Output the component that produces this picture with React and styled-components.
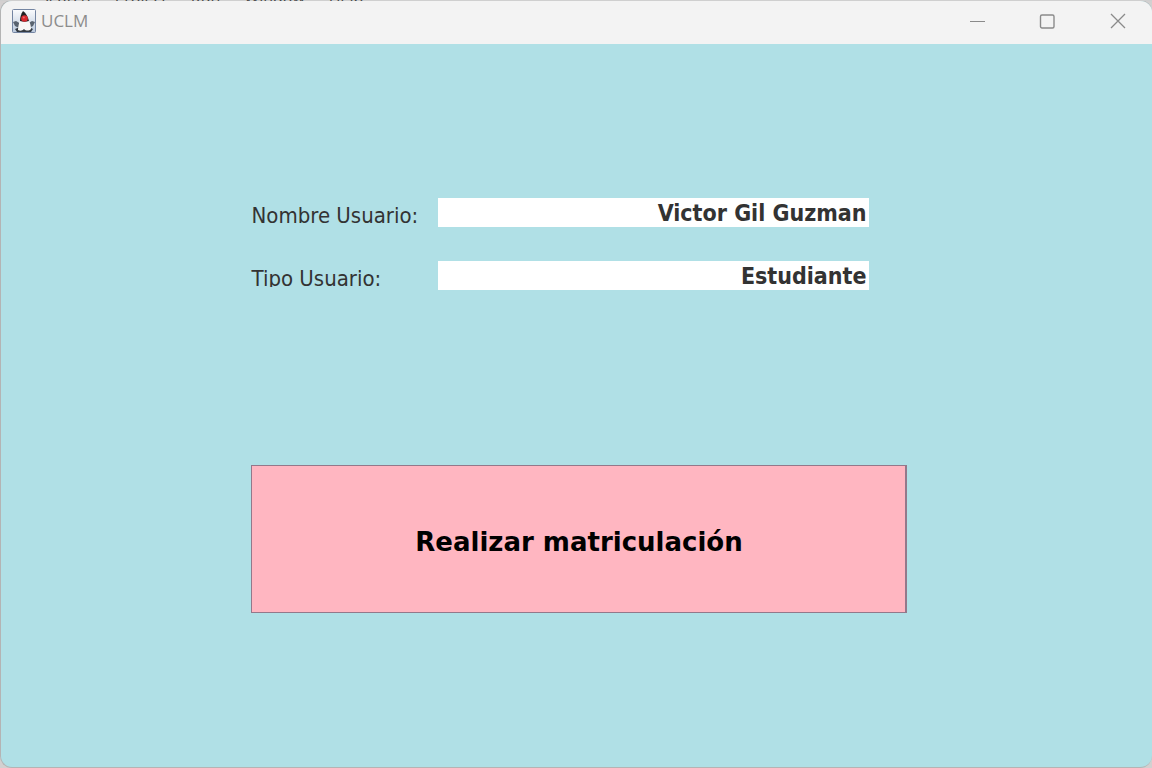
import React from "react";
import styled, { createGlobalStyle } from "styled-components";

const GlobalStyle = createGlobalStyle`
  *, *::before, *::after { box-sizing: border-box; }
  body { margin: 0; background: #d3d0d0; }
`;

const dialogFont = '"DejaVu Sans Condensed", "DejaVu Sans", sans-serif';

const Desktop = styled.div`
  position: relative;
  min-height: 100vh;
  display: flex;
  flex-direction: column;
`;

const Frame = styled.main`
  flex: 1;
  display: flex;
  flex-direction: column;
  overflow: hidden;
  border: 1px solid #b4b4b4;
  border-right: 0;
  border-radius: 12px;
  background: #b0e0e6;
`;

const TitleBar = styled.header`
  display: flex;
  align-items: center;
  height: 43px;
  padding: 0 0 3px 11px;
  background: #f3f3f3;
`;

const Title = styled.h1`
  flex: 1;
  margin: 0 0 0 5px;
  font: 400 17px/24px "Open Sans", "Noto Sans", sans-serif;
  color: #8c8c8c;
`;

const WindowButton = styled.button`
  display: grid;
  place-items: center;
  width: 70px;
  height: 40px;
  padding: 0;
  border: 0;
  background: none;
  color: #8a8a8a;
`;

const Content = styled.form`
  width: 660px;
  max-width: 100%;
  margin: 0 auto;
  padding: 154px 0 0 4px;
`;

const Fields = styled.div`
  display: grid;
  gap: 34px;
`;

const Row = styled.div`
  display: grid;
  grid-template-columns: 187px 431px;
  align-items: start;
`;

const Label = styled.label`
  height: 26px;
  padding-left: 1px;
  overflow: hidden;
  font: 400 22px/35px ${dialogFont};
  color: #333;
`;

const Field = styled.input`
  width: 100%;
  height: 29px;
  padding: 0 2px 0 0;
  border: 0;
  outline: 0;
  background: #fff;
  text-align: right;
  font: 700 23px/27px ${dialogFont};
  color: #333;
`;

const EnrolButton = styled.button`
  display: block;
  width: 100%;
  height: 148px;
  margin-top: 175px;
  padding: 5px 0 0 2px;
  border: 1px solid #94788a;
  border-right-width: 2px;
  background: #ffb6c1;
  font: 700 26px/32px "DejaVu Sans", sans-serif;
  color: #000;
`;

function DukeIcon() {
  return (
    <svg width="24" height="24" viewBox="0 0 24 24" aria-hidden="true">
      <defs>
        <linearGradient id="tile" x1="0" y1="0" x2="0" y2="1">
          <stop offset="0" stopColor="#fbfcfe" />
          <stop offset="1" stopColor="#b9c8dc" />
        </linearGradient>
      </defs>
      <rect x="0.5" y="0.5" width="23" height="23" rx="1" fill="url(#tile)" stroke="#7485a2" />
      <path d="M1 13L4 12L9 15L7 19L3 17Z" fill="#59636f" />
      <path d="M23 13L20 12L15 15L17 19L21 17Z" fill="#59636f" />
      <path d="M3 20L8 18H17L21 20L19 23H5Z" fill="#343b43" />
      <path d="M8 11C7 14 6 18 6 21C8 22 10 22 12 20C14 22 17 22 19 20C19 17 18 13 16 10Z" fill="#f8f8f6" />
      <path d="M11 2C9 5 8 8 8 12C11 13 14 13 17 12C16 8 14 4 11 2Z" fill="#1e2022" />
      <circle cx="12.500" cy="9.500" r="3.300" fill="#d8292f" />
      <circle cx="11.800" cy="8.500" r="1" fill="#f2676a" />
    </svg>
  );
}

const MenuStrip = styled.div`
  position: absolute;
  top: 0;
  left: 0;
  right: 0;
  height: 1px;
  overflow: hidden;
  display: flex;
  align-items: flex-end;
  gap: 24px;
  padding-left: 40px;
  background: #cfcfcf;
  font: 400 16px/8px "Open Sans", sans-serif;
  color: #444;
`;

const menus = ["Search", "Project", "Run", "Window", "Help"];

const rows = [
  { id: "nombre", label: "Nombre Usuario:", value: "Victor Gil Guzman" },
  { id: "tipo", label: "Tipo Usuario:", value: "Estudiante" },
];

export default function App() {
  return (
    <Desktop>
      <GlobalStyle />
      <Frame>
        <TitleBar>
          <DukeIcon />
          <Title>UCLM</Title>
          <WindowButton type="button" aria-label="Minimizar">
            <svg width="16" height="16" fill="none" stroke="currentColor"><path d="M1 8.500h15" /></svg>
          </WindowButton>
          <WindowButton type="button" aria-label="Maximizar">
            <svg width="16" height="16" fill="none" stroke="currentColor" strokeWidth="1.400"><rect x="1.500" y="2" width="13.500" height="13" rx="1.500" /></svg>
          </WindowButton>
          <WindowButton type="button" aria-label="Cerrar">
            <svg width="18" height="16" fill="none" stroke="currentColor" strokeWidth="1.300"><path d="M3 1l14 14M17 1L3 15" /></svg>
          </WindowButton>
        </TitleBar>
        <Content onSubmit={(e) => e.preventDefault()}>
          <Fields>
            {rows.map((r) => (
              <Row key={r.id}>
                <Label htmlFor={r.id}>{r.label}</Label>
                <Field id={r.id} defaultValue={r.value} readOnly />
              </Row>
            ))}
          </Fields>
          <EnrolButton type="submit">Realizar matriculación</EnrolButton>
        </Content>
      </Frame>
      <MenuStrip aria-hidden="true">
        {menus.map((m) => <span key={m}>{m}</span>)}
      </MenuStrip>
    </Desktop>
  );
}
